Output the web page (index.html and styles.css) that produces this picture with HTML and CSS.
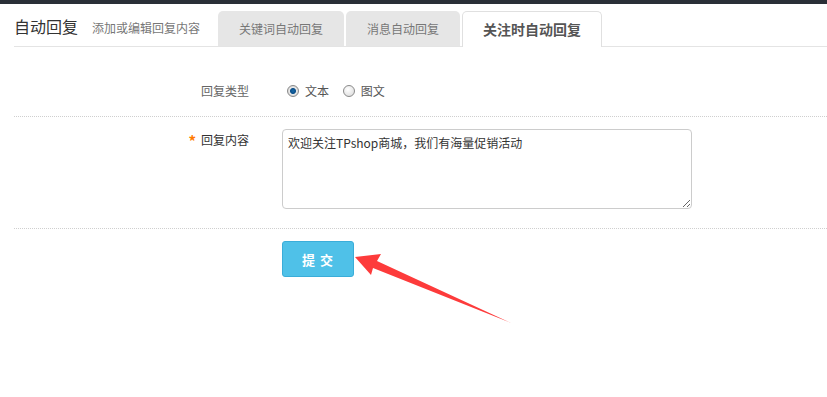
FILE: index.html
```html
<!DOCTYPE html>
<html lang="zh-CN">
<head>
    <meta charset="UTF-8">
    <meta name="viewport" content="width=device-width, initial-scale=1.0">
    <title>自动回复</title>
    <link rel="stylesheet" href="styles.css">
</head>
<body>
    <div class="topbar"></div>
    <div class="page">
        <div class="head">
            <h3>自动回复</h3>
            <span class="subtitle">添加或编辑回复内容</span>
            <ul class="tabs">
                <li class="tab">关键词自动回复</li>
                <li class="tab">消息自动回复</li>
                <li class="tab active">关注时自动回复</li>
            </ul>
        </div>
        <form class="form">
            <dl class="row">
                <dt class="label">回复类型</dt>
                <dd class="field">
                    <label class="radio"><span class="dot checked"></span>文本</label>
                    <label class="radio"><span class="dot"></span>图文</label>
                </dd>
            </dl>
            <dl class="row">
                <dt class="label label-top"><em>*</em>回复内容</dt>
                <dd class="field">
                    <textarea class="content">欢迎关注TPshop商城，我们有海量促销活动</textarea>
                </dd>
            </dl>
            <div class="actions">
                <button type="button" class="submit">提 交</button>
            </div>
        </form>
    </div>
    <!-- 标注箭头 -->
    <svg class="arrow" width="827" height="397" viewBox="0 0 827 397">
        <polygon points="355,257 381,254 377,261 511,323 373,268 371,275" fill="#fd3b3b"/>
    </svg>
</body>
</html>
```

FILE: styles.css
```css
body {
    margin: 0;
    font-family: "Noto Sans CJK SC", "Noto Sans", sans-serif;
    font-size: 12px;
    color: #333;
    background-color: #fff;
}
.topbar {
    height: 4px;
    background-color: #2a2f37;
}
.page {
    padding-left: 14px;
}
.head {
    display: flex;
    align-items: flex-end;
    height: 42px;
    border-bottom: 1px solid #e4e4e4;
}
.head h3 {
    margin: 0;
    align-self: center;
    font-size: 16px;
    font-weight: normal;
    color: #333;
    line-height: 22px;
    padding-top: 2px;
}
.subtitle {
    align-self: center;
    margin-left: 14px;
    padding-top: 4px;
    color: #777;
    font-size: 12px;
}
.tabs {
    display: flex;
    margin: 0 0 0 18px;
    padding: 0;
    list-style: none;
}
.tab {
    height: 35px;
    line-height: 35px;
    padding: 0 21px;
    margin-right: 2px;
    background-color: #e6e6e6;
    border-radius: 5px 5px 0 0;
    color: #777;
    font-size: 12px;
}
.tab.active {
    height: 35px;
    line-height: 34px;
    margin-bottom: -1px;
    padding: 0 20px;
    background-color: #fff;
    border: 1px solid #e0e0e0;
    border-bottom: none;
    color: #555;
    font-size: 14px;
    font-weight: bold;
}
.form {
    padding-top: 22px;
}
.row {
    display: grid;
    grid-template-columns: 235px 1fr;
    column-gap: 33px;
    margin: 0;
    padding: 13px 0 15px;
    border-bottom: 1px dotted #cfcfcf;
}
.row + .row {
    padding-top: 12px;
}
.label {
    text-align: right;
    line-height: 18px;
    color: #666;
}
.label-top {
    padding-top: 2px;
    color: #333;
}
.label em {
    font-style: normal;
    font-size: 15px;
    font-weight: bold;
    line-height: 18px;
    color: #ff7a00;
    margin-right: 5px;
    vertical-align: -2px;
}
.field {
    margin: 0;
    line-height: 18px;
    color: #555;
}
.radio {
    display: inline-flex;
    align-items: center;
    margin-right: 6px;
}
.dot {
    box-sizing: border-box;
    width: 12px;
    height: 12px;
    margin: 0 6px 0 5px;
    border-radius: 50%;
    border: 1px solid #8a8a8a;
    background: radial-gradient(circle at 40% 35%, #fff, #d8d8d8);
}
.dot.checked {
    background: radial-gradient(circle, #1a6aa8 0, #0b4f8a 2.5px, #e8e8e8 3.5px, #cfcfcf 6px);
}
.content {
    box-sizing: border-box;
    display: block;
    width: 410px;
    height: 80px;
    margin-bottom: 4px;
    padding: 4px 5px;
    border: 1px solid #ccc;
    border-radius: 4px;
    font-family: "Noto Sans CJK SC", "Noto Sans", sans-serif;
    font-size: 12px;
    line-height: 18px;
    color: #333;
}
.actions {
    padding: 12px 0 0 268px;
}
.submit {
    width: 72px;
    height: 36px;
    border: 1px solid #3aadd9;
    border-radius: 3px;
    background-color: #4fc1e8;
    color: #fff;
    font-family: "Noto Sans CJK SC", "Noto Sans", sans-serif;
    font-size: 13px;
    font-weight: bold;
    letter-spacing: 1px;
    cursor: pointer;
}
.arrow {
    position: absolute;
    top: 0;
    left: 0;
    pointer-events: none;
}
```
